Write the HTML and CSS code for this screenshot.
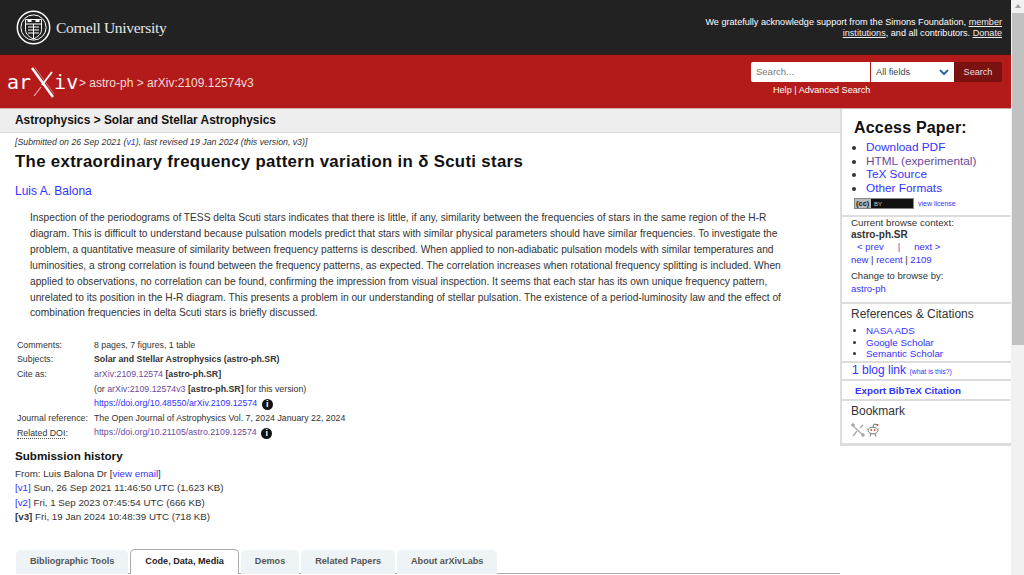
FILE: index.html
```html
<!DOCTYPE html>
<html lang="en">
<head>
<meta charset="utf-8">
<title>The extraordinary frequency pattern variation in δ Scuti stars</title>
<link rel="stylesheet" href="styles.css">
</head>
<body>
<div class="page">
  <header class="cornell">
    <a class="cu-logo" href="#">
      <svg class="seal" width="35" height="35" viewBox="0 0 35 35" fill="none" stroke="#fff">
        <circle cx="17.5" cy="17.5" r="16.2" stroke-width="1.5"/>
        <circle cx="17.5" cy="17.5" r="12.6" stroke-width="1"/>
        <path d="M9.5 9.5h16v10c0 5-4 7.5-8 9.5-4-2-8-4.500-8-9.500z" stroke-width="1"/>
        <path d="M9.500 14h16M17.500 14v15M12 17h11M12 20h11M12 23h11" stroke-width="1"/>
        <path d="M11.500 11h4M19.500 11h4" stroke-width="2"/>
      </svg>
      <span class="cu-name">Cornell University</span>
    </a>
    <p class="support">We gratefully acknowledge support from the Simons Foundation, <a href="#">member</a> <a href="#">institutions</a>, and all contributors. <a href="#">Donate</a></p>
  </header>
  <div class="redbar">
    <div class="crumbs">
      <span class="ax-logo">ar<svg class="ax-x" width="23" height="31" viewBox="0 0 23 31" fill="none"><path d="M1 1L22 30" stroke="#fff" stroke-width="2.600"/><path d="M4 0.500L23 27" stroke="#e9a9a9" stroke-width="0.600"/><path d="M21 5L11 18" stroke="#fff" stroke-width="1.800"/><path d="M10 20L3 29" stroke="#e9a9a9" stroke-width="1.200"/></svg>iv</span>
      <span class="trail">&gt; <a href="#">astro-ph</a> &gt; arXiv:2109.12574v3</span>
    </div>
    <div class="searchwrap">
      <form class="searchform">
        <span class="s-input">Search...</span>
        <span class="s-select">All fields
          <svg width="10" height="7" viewBox="0 0 10 7" fill="none"><path d="M1 1l4 4 4-4" stroke="#2a6ea6" stroke-width="2"/></svg>
        </span>
        <span class="s-btn">Search</span>
      </form>
      <div class="s-links"><a href="#">Help</a> | <a href="#">Advanced Search</a></div>
    </div>
  </div>
  <div class="columns">
    <main class="content">
      <div class="subheader">Astrophysics &gt; Solar and Stellar Astrophysics</div>
      <div class="abs">
        <div class="dateline">[Submitted on 26 Sep 2021 (<a href="#">v1</a>), last revised 19 Jan 2024 (this version, v3)]</div>
        <h1 class="title">The extraordinary frequency pattern variation in δ Scuti stars</h1>
        <div class="authors"><a href="#">Luis A. Balona</a></div>
        <blockquote class="abstract">Inspection of the periodograms of TESS delta Scuti stars indicates that there is little, if any, similarity between the frequencies of stars in the same region of the H-R diagram. This is difficult to understand because pulsation models predict that stars with similar physical parameters should have similar frequencies. To investigate the problem, a quantitative measure of similarity between frequency patterns is described. When applied to non-adiabatic pulsation models with similar temperatures and luminosities, a strong correlation is found between the frequency patterns, as expected. The correlation increases when rotational frequency splitting is included. When applied to observations, no correlation can be found, confirming the impression from visual inspection. It seems that each star has its own unique frequency pattern, unrelated to its position in the H-R diagram. This presents a problem in our understanding of stellar pulsation. The existence of a period-luminosity law and the effect of combination frequencies in delta Scuti stars is briefly discussed.</blockquote>
        <table class="meta">
          <tr><td class="lbl">Comments:</td><td>8 pages, 7 figures, 1 table</td></tr>
          <tr><td class="lbl">Subjects:</td><td><b>Solar and Stellar Astrophysics (astro-ph.SR)</b></td></tr>
          <tr><td class="lbl">Cite as:</td><td><a class="visited" href="#">arXiv:2109.12574</a> <b>[astro-ph.SR]</b></td></tr>
          <tr><td></td><td>(or <a class="visited" href="#">arXiv:2109.12574v3</a> <b>[astro-ph.SR]</b> for this version)</td></tr>
          <tr><td></td><td><a href="#">https://doi.org/10.48550/arXiv.2109.12574</a> <span class="info">i</span></td></tr>
          <tr><td class="lbl">Journal reference:</td><td>The Open Journal of Astrophysics Vol. 7, 2024 January 22, 2024</td></tr>
          <tr><td class="lbl"><span class="dotted">Related DOI</span>:</td><td><a class="visited" href="#">https://doi.org/10.21105/astro.2109.12574</a> <span class="info">i</span></td></tr>
        </table>
        <h2 class="hist-title">Submission history</h2>
        <div class="history">
          From: Luis Balona Dr [<a href="#">view email</a>]<br>
          <a href="#">[v1]</a> Sun, 26 Sep 2021 11:46:50 UTC (1,623 KB)<br>
          <a href="#">[v2]</a> Fri, 1 Sep 2023 07:45:54 UTC (666 KB)<br>
          <b>[v3]</b> Fri, 19 Jan 2024 10:48:39 UTC (718 KB)
        </div>
      </div>
      <div class="tabs">
        <span class="tab">Bibliographic Tools</span>
        <span class="tab active">Code, Data, Media</span>
        <span class="tab">Demos</span>
        <span class="tab">Related Papers</span>
        <span class="tab">About arXivLabs</span>
      </div>
    </main>
    <aside class="side">
      <section class="box access">
        <h2 class="access-title">Access Paper:</h2>
        <ul class="access-list">
          <li><a href="#">Download PDF</a></li>
          <li><a class="visited" href="#">HTML (experimental)</a></li>
          <li><a href="#">TeX Source</a></li>
          <li><a href="#">Other Formats</a></li>
        </ul>
        <div class="license">
          <span class="cc"><span class="cc-mark">(cc)</span> BY</span>
          <a href="#">view license</a>
        </div>
      </section>
      <section class="box browse">
        <div class="ctx-label">Current browse context:</div>
        <div class="ctx">astro-ph.SR</div>
        <div class="prevnext"><a href="#">&lt; prev</a><span class="pipe">|</span><a href="#">next &gt;</a></div>
        <div class="row"><a href="#">new</a> | <a href="#">recent</a> | <a href="#">2109</a></div>
        <div class="change">Change to browse by:</div>
        <div class="row"><a href="#">astro-ph</a></div>
      </section>
      <section class="box refs">
        <h3 class="box-title">References &amp; Citations</h3>
        <ul class="ref-list">
          <li><a href="#">NASA ADS</a></li>
          <li><a href="#">Google Scholar</a></li>
          <li><a href="#">Semantic Scholar</a></li>
        </ul>
      </section>
      <section class="box blog"><a href="#">1 blog link</a> <a class="what" href="#">(what is this?)</a></section>
      <section class="box bibtex"><a href="#">Export BibTeX Citation</a></section>
      <section class="box bookmark">
        <h3 class="box-title">Bookmark</h3>
        <div class="bm-icons">
          <svg width="14" height="14" viewBox="0 0 14 14" fill="none" stroke="#a8a8a8"><path d="M1 2l11 10" stroke-width="1.300"/><path d="M12 2L9 5M6 8l-4 5" stroke-width="1.300"/><circle cx="2" cy="2" r="1.300" fill="#a8a8a8"/><circle cx="12" cy="12" r="1.300" fill="#a8a8a8"/></svg>
          <svg width="14" height="14" viewBox="0 0 14 14" fill="none" stroke="#777"><ellipse cx="7" cy="7.500" rx="5" ry="3.300"/><path d="M7 4l1-3 3 .7M5 11l-1 2.500M9 11l1 2.500M2 6.500L1 5.500M12 6.500l1-1"/><circle cx="11.500" cy="2" r="1" fill="#c9502b" stroke="none"/><circle cx="5.300" cy="7" r=".9" fill="#d8491f" stroke="none"/><circle cx="8.700" cy="7" r=".9" fill="#d8491f" stroke="none"/></svg>
        </div>
      </section>
    </aside>
  </div>
</div>
<div class="scrollbar">
  <span class="sb-up"></span>
  <span class="sb-thumb"></span>
</div>
</body>
</html>
```
FILE: styles.css
```css
* { box-sizing: border-box; }
html, body { margin: 0; height: 575px; overflow: hidden; }
body { display: flex; font-family: "Liberation Sans", Arial, sans-serif; color: #222; background: #fff; font-size: 12px; }
a { color: #3333ff; text-decoration: none; }
a.visited { color: #6c4a9c; }
.page { width: 1011px; flex: none; }
.cornell { height: 55px; background: #222; display: flex; justify-content: space-between; align-items: center; padding: 0 9px 0 16px; border-bottom: 1px solid #3a1a1a; }
.cu-logo { display: flex; align-items: center; gap: 5px; color: #fff; }
.cu-name { font-family: "Liberation Serif", serif; font-size: 15.500px; letter-spacing: -0.3px; color: #e8e8e8; padding-top: 2px; }
.support { margin: 1px 0 0; width: 320px; text-align: right; color: #fff; font-size: 9.100px; line-height: 11px; }
.support a { color: #eee; text-decoration: underline; }
.redbar { height: 54px; background: #b31b1b; display: flex; justify-content: space-between; padding: 7px 9px 0 7px; border-bottom: 1px solid #cfa8a8; }
.crumbs { display: flex; align-items: center; height: 41px; color: #f5dada; font-size: 12px; }
.ax-logo { display: flex; align-items: center; font-family: "DejaVu Sans Mono", monospace; font-size: 20px; color: #fff; line-height: 31px; width: 72px; }
.ax-x { flex: none; }
.trail a { color: #f5dada; }
.searchwrap { width: 251px; display: flex; flex-direction: column; }
.searchform { display: flex; height: 20px; }
.s-input { width: 119px; background: #fff; color: #777; font-size: 9.500px; line-height: 20px; padding-left: 5px; border-radius: 2px 0 0 2px; }
.s-select { width: 83px; margin-left: 1px; background: #fff; color: #444; font-size: 9.200px; line-height: 20px; padding: 0 5px; display: flex; justify-content: space-between; align-items: center; }
.s-btn { width: 48px; background: #7a1212; color: #eedede; font-size: 9.100px; line-height: 21px; text-align: center; border-radius: 0 2px 2px 0; }
.s-links { margin-top: 2px; padding-left: 22px; color: #fff; font-size: 9.100px; line-height: 12px; }
.s-links a { color: #fff; }
.columns { display: flex; }
.content { width: 840px; flex: none; height: 466px; overflow: hidden; }
.subheader { height: 24px; background: #eee; border-bottom: 1px solid #ddd; padding-left: 15px; font-size: 11.900px; font-weight: bold; line-height: 22px; color: #111; }
.abs { padding: 4px 0 0 15px; }
.dateline { font-size: 8.760px; font-style: italic; line-height: 11px; color: #333; }
.title { margin: 4px 0 0; font-size: 16.800px; line-height: 20px; font-weight: bold; color: #111; letter-spacing: 0.33px; }
.authors { margin-top: 11px; font-size: 12px; line-height: 16px; }
.abstract { margin: 11px 36px 0 15px; font-size: 10.200px; line-height: 15.900px; color: #333; }
.meta { margin: 16px 0 0; border-collapse: collapse; font-size: 8.800px; color: #333; }
.meta td { padding: 0; height: 14.650px; line-height: 12px; white-space: nowrap; }
.meta .lbl { width: 79px; padding-left: 2px; }
.dotted { border-bottom: 1px dotted #555; }
.info { display: inline-block; width: 11px; height: 11px; margin-left: 2px; border-radius: 50%; background: #111; color: #fff; font-size: 9px; font-weight: bold; line-height: 11px; text-align: center; vertical-align: -1px; }
.hist-title { margin: 9px 0 0; font-size: 11.600px; line-height: 14px; font-weight: bold; color: #111; }
.history { margin-top: 4px; font-size: 9.750px; line-height: 14.500px; color: #333; }
.tabs { display: flex; gap: 2px; margin: 24px 0 0 16px; height: 25px; border-bottom: 1px solid #aaa; }
.tab { padding: 0 14px; height: 24px; margin-top: 1px; background: #eef3f6; border-radius: 5px 5px 0 0; font-size: 9.120px; font-weight: bold; line-height: 22px; color: #555; }
.tab.active { height: 25px; margin-top: 0; background: #fff; border: 1px solid #aaa; border-bottom: 0; color: #222; line-height: 23px; }
.side { width: 171px; flex: none; border-left: 2px solid #ddd; background: #fff; height: 337px; border-bottom: 3px solid #ddd; }
.box { background: #fff; border-bottom: 2px solid #ddd; padding: 0 0 0 9px; font-size: 9.500px; line-height: 13px; color: #333; }
.access { height: 108px; padding: 9px 0 0 12px; }
.access-title { margin: 0; font-size: 16px; line-height: 19px; font-weight: bold; color: #111; letter-spacing: 0.2px; }
.access-list { margin: 4px 0 0; padding: 0 0 0 12px; font-size: 11.800px; line-height: 13.500px; }
.license { display: flex; align-items: center; gap: 4px; margin-top: 2px; font-size: 7px; }
.cc { width: 60px; height: 11px; background: #111; border: 1px solid #888; box-shadow: inset 16px 0 0 #bbb; color: #ccc; font-size: 6px; line-height: 9px; padding-left: 1px; }
.cc-mark { color: #111; font-weight: bold; font-size: 7.500px; margin-right: 3px; }
.browse { height: 87px; }
.ctx-label { font-size: 9.700px; line-height: 11px; }
.ctx { font-weight: bold; font-size: 10px; line-height: 13px; }
.prevnext { display: flex; padding-left: 6px; line-height: 12px; }
.pipe { margin: 0 14px; color: #6c4a9c; }
.row { line-height: 13px; }
.change { margin-top: 4px; line-height: 12px; }
.refs { height: 59px; padding-top: 3px; }
.box-title { margin: 0; font-size: 12px; font-weight: normal; line-height: 15px; color: #333; }
.ref-list { margin: 3px 0 0; padding: 0 0 0 15px; font-size: 9.850px; line-height: 11.500px; }
.blog { height: 18px; font-size: 12px; line-height: 14px; padding-left: 10px; }
.what { font-size: 6.900px; }
.bibtex { height: 20px; font-size: 9.800px; font-weight: bold; line-height: 19px; padding-left: 13px; }
.bookmark { border-bottom: 0; padding-top: 3px; }
.bm-icons { display: flex; gap: 1px; margin-top: 4px; }
.scrollbar { width: 13px; flex: none; height: 575px; background: #f1f1f1; display: flex; flex-direction: column; align-items: flex-end; }
.sb-up { height: 13px; width: 12px; flex: none; position: relative; }
.sb-up::before { content: ""; position: absolute; left: 3px; top: 4px; border: 3px solid transparent; border-top: 0; border-bottom: 4px solid #a3a3a3; }
.sb-thumb { width: 12px; height: 332px; background: #c1c1c1; flex: none; }
```
